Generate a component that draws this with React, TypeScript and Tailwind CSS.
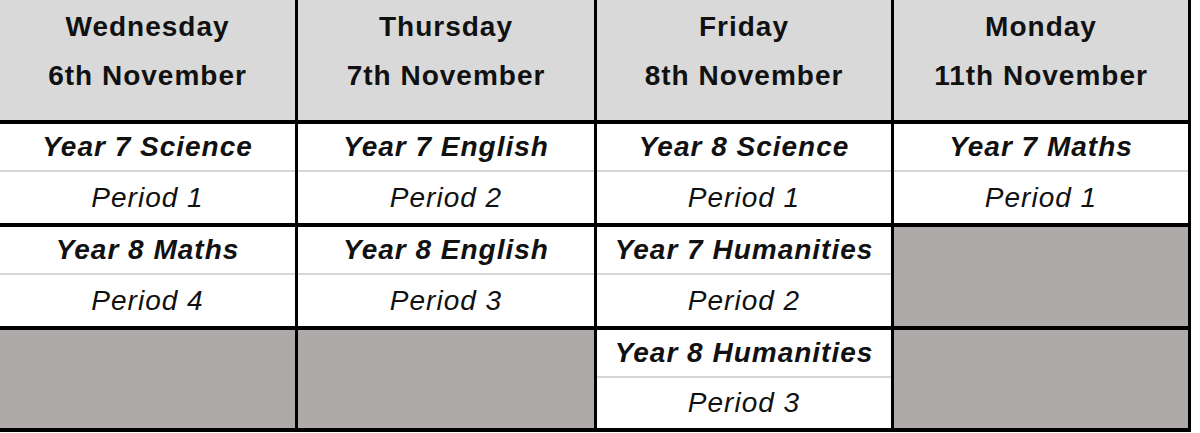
type Lesson = { subject: string; period: string };

type Slot = Lesson | null;

const days = [
  { day: 'Wednesday', date: '6th November' },
  { day: 'Thursday', date: '7th November' },
  { day: 'Friday', date: '8th November' },
  { day: 'Monday', date: '11th November' },
];

// rows of the timetable, one entry per day column
const rows: Slot[][] = [
  [
    { subject: 'Year 7 Science', period: 'Period 1' },
    { subject: 'Year 7 English', period: 'Period 2' },
    { subject: 'Year 8 Science', period: 'Period 1' },
    { subject: 'Year 7 Maths', period: 'Period 1' },
  ],
  [
    { subject: 'Year 8 Maths', period: 'Period 4' },
    { subject: 'Year 8 English', period: 'Period 3' },
    { subject: 'Year 7 Humanities', period: 'Period 2' },
    null,
  ],
  [null, null, { subject: 'Year 8 Humanities', period: 'Period 3' }, null],
];

function LessonCell({ slot }: { slot: Slot }) {
  if (!slot) return <div className="bg-[#aeaaaa]" />;

  return (
    <div className="flex flex-col bg-white italic text-[28px] tracking-[1px] text-[#111]">
      <div className="flex h-[48px] items-center justify-center border-b-2 border-[#d6d6d6] font-bold">
        {slot.subject}
      </div>
      <div className="flex flex-1 items-center justify-center">{slot.period}</div>
    </div>
  );
}

export default function App() {
  return (
    <div
      className="h-[433px] w-[1200px] bg-white"
      style={{ fontFamily: '"Liberation Sans", Arial, sans-serif' }}
    >
      <div className="grid w-[1191px] grid-cols-[295px_296px_294px_294px] grid-rows-[120px_99px_99px_98px] gap-x-[3px] gap-y-[4px] bg-black pr-[3px] pb-[4px]">
        {days.map((d) => (
          <div
            key={d.day}
            className="flex flex-col items-center bg-[#d9d9d9] pt-[2px] text-[28px] font-bold leading-[49px] tracking-[1px] text-[#111]"
          >
            <span>{d.day}</span>
            <span>{d.date}</span>
          </div>
        ))}
        {rows.map((row, i) =>
          row.map((slot, j) => <LessonCell key={`${i}-${j}`} slot={slot} />)
        )}
      </div>
    </div>
  );
}
